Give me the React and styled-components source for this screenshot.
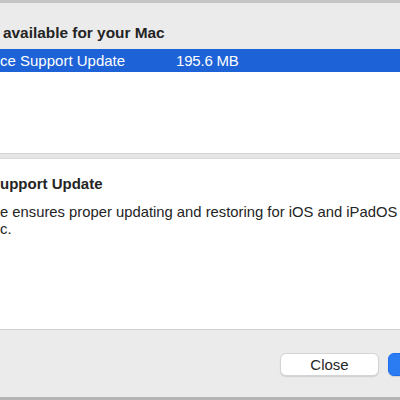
import React from 'react';
import styled, { createGlobalStyle } from 'styled-components';

const GlobalStyle = createGlobalStyle`
  html, body {
    margin: 0;
    padding: 0;
    width: 400px;
    height: 400px;
    overflow: hidden;
    background: #ececec;
    font-family: "Liberation Sans", Arial, sans-serif;
    -webkit-font-smoothing: antialiased;
  }
`;

const Window = styled.div`
  width: 500px;
  height: 400px;
  display: flex;
  flex-direction: column;
  border-top: 3px solid #c6c6c6;
  border-bottom: 3px solid #b4b4b4;
  box-sizing: border-box;
  background: #ebebeb;
`;

const Header = styled.div`
  height: 46px;
  display: flex;
  align-items: center;
  padding-left: 3px;
  padding-top: 13px;
  box-sizing: border-box;
  font-size: 15.4px;
  font-weight: bold;
  color: #232323;
`;

// text whose start is cut off by the screenshot edge
const Cut = styled.span`
  display: inline-block;
  width: 300px;
  margin-left: -300px;
  text-align: right;
  white-space: pre;
  overflow: hidden;
  vertical-align: top;
`;

const List = styled.div`
  height: 104px;
  background: #fff;
`;

const Row = styled.div`
  height: 23px;
  display: grid;
  grid-template-columns: 176px 1fr;
  align-items: center;
  font-size: 15px;
  background: ${p => (p.$selected ? '#1d62d6' : 'transparent')};
  color: ${p => (p.$selected ? '#fff' : '#222')};
`;

const Cell = styled.span`
  white-space: nowrap;
  letter-spacing: ${p => p.$tight ? '-0.2px' : '0'};
`;

const Splitter = styled.div`
  height: 6px;
  background: #e6e6e6;
  border-top: 1px solid #d2d2d2;
  border-bottom: 1px solid #d9d9d9;
  box-sizing: border-box;
`;

const Details = styled.div`
  height: 170px;
  background: #fff;
  padding-top: 16px;
  box-sizing: border-box;
  color: #242424;
`;

const DetailTitle = styled.div`
  font-size: 15px;
  font-weight: bold;
  line-height: 17px;
  margin-bottom: 12px;
`;

const DetailText = styled.div`
  font-size: 14.8px;
  line-height: 17px;
`;

const TextLine = styled.div`
  white-space: nowrap;
`;

const Footer = styled.div`
  flex: 1;
  border-top: 1px solid #cfcfcf;
  display: flex;
  justify-content: flex-end;
  align-items: flex-start;
  gap: 9px;
  padding: 23px 12px 0 0;
`;

const Button = styled.button`
  width: ${p => p.$width}px;
  height: 23px;
  border-radius: 6px;
  font-family: inherit;
  font-size: 15px;
  padding: 0;
  border: 1px solid ${p => (p.$primary ? '#1b6ef0' : '#d4d4d4')};
  background: ${p => (p.$primary ? '#2b7bf3' : '#fff')};
  color: ${p => (p.$primary ? '#fff' : '#262626')};
  box-shadow: 0 1px 1px rgba(0, 0, 0, 0.12);
`;

export default function App() {
  return (
    <>
      <GlobalStyle />
      <Window>
        <Header>
          <span><Cut>{'Software updates are '}</Cut>available for your Mac</span>
        </Header>
        <List>
          <Row $selected>
            <Cell><Cut>Apple Mobile Devi</Cut>ce Support Update</Cell>
            <Cell $tight>195.6 MB</Cell>
          </Row>
        </List>
        <Splitter />
        <Details>
          <DetailTitle><Cut>Apple Mobile Device S</Cut>upport Update</DetailTitle>
          <DetailText>
            <TextLine><Cut>This updat</Cut>e ensures proper updating and restoring for iOS and iPadOS</TextLine>
            <TextLine><Cut>devices on your Ma</Cut>c.</TextLine>
          </DetailText>
        </Details>
        <Footer>
          <Button $width={99}>Close</Button>
          <Button $width={100} $primary>Install Now</Button>
        </Footer>
      </Window>
    </>
  );
}
